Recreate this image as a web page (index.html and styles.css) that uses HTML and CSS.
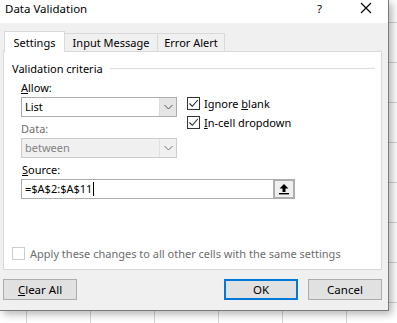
FILE: index.html
```html
<!DOCTYPE html>
<html lang="en">

<head>
    <meta charset="UTF-8">
    <title>Data Validation</title>
    <link rel="stylesheet" href="styles.css">
</head>

<body>
    <div class="dialog">
        <div class="titlebar">
            <span class="title">Data Validation</span>
            <span class="help">?</span>
            <svg class="close" width="12" height="12" viewBox="0 0 12 12">
                <path d="M1 1 L11 11 M11 1 L1 11" stroke="#000" stroke-width="1.1" fill="none" />
            </svg>
        </div>

        <div class="content">
            <div class="tabs">
                <div class="tab active">Settings</div>
                <div class="tab input-tab">Input Message</div>
                <div class="tab alert-tab">Error Alert</div>
            </div>

            <div class="panel">
                <div class="group-title">
                    <span>Validation criteria</span>
                    <span class="rule"></span>
                </div>

                <div class="criteria">
                    <div class="fields">
                        <div class="label"><u>A</u>llow:</div>
                        <div class="select">
                            <span class="value">List</span>
                            <span class="arrow">
                                <svg width="9" height="6" viewBox="0 0 9 6">
                                    <path d="M0.5 1 L4.5 5 L8.5 1" stroke="#555" fill="none" />
                                </svg>
                            </span>
                        </div>
                        <div class="label disabled">Data:</div>
                        <div class="select off">
                            <span class="value">between</span>
                            <span class="arrow">
                                <svg width="9" height="6" viewBox="0 0 9 6">
                                    <path d="M0.5 1 L4.5 5 L8.5 1" stroke="#777" fill="none" />
                                </svg>
                            </span>
                        </div>
                    </div>

                    <div class="checks">
                        <div class="check">
                            <span class="box">
                                <svg width="11" height="11" viewBox="0 0 11 11">
                                    <path d="M1.5 5.5 L4.3 8.3 L9.8 2" stroke="#222" stroke-width="1.1" fill="none" />
                                </svg>
                            </span>
                            <span>Ignore <u>b</u>lank</span>
                        </div>
                        <div class="check">
                            <span class="box">
                                <svg width="11" height="11" viewBox="0 0 11 11">
                                    <path d="M1.5 5.5 L4.3 8.3 L9.8 2" stroke="#222" stroke-width="1.1" fill="none" />
                                </svg>
                            </span>
                            <span><u>I</u>n-cell dropdown</span>
                        </div>
                    </div>
                </div>

                <div class="label source-label"><u>S</u>ource:</div>
                <div class="source-row">
                    <div class="input">=$A$2:$A$11<span class="caret"></span></div>
                    <div class="pick">
                        <svg width="12" height="12" viewBox="0 0 12 12">
                            <path d="M6 1 L10.5 5.5 L7.5 5.5 L7.5 9 L4.5 9 L4.5 5.5 L1.5 5.5 Z" fill="#000" />
                            <rect x="1" y="10" width="10" height="1.4" fill="#000" />
                        </svg>
                    </div>
                </div>

                <div class="apply">
                    <span class="box empty"></span>
                    <span>Apply these changes to all other cells with the same settings</span>
                </div>
            </div>

            <div class="footer">
                <button class="btn"><u>C</u>lear All</button>
                <div class="spacer"></div>
                <button class="btn primary">OK</button>
                <button class="btn">Cancel</button>
            </div>
        </div>
    </div>
</body>

</html>
```

FILE: styles.css
```css
body {
    margin: 0;
    width: 397px;
    height: 323px;
    overflow: hidden;
    font-family: "Noto Sans", "Open Sans", sans-serif;
    font-size: 11px;
    color: #000;
    background-color: #fff;
    background-image:
        repeating-linear-gradient(to right, transparent 0, transparent 26px, #d4d4d4 26px, #d4d4d4 27px, transparent 27px, transparent 64px),
        repeating-linear-gradient(to bottom, transparent 0, transparent 22px, #d4d4d4 22px, #d4d4d4 23px, transparent 23px, transparent 40px);
    background-size: 100% 100%, 100% 100%;
}

.dialog {
    width: 388px;
    height: 310px;
    background-color: #f0f0f0;
    border-right: 1px solid #7a7a7a;
    border-bottom: 1px solid #7a7a7a;
    box-shadow: 3px 3px 8px rgba(0, 0, 0, 0.3);
    display: flex;
    flex-direction: column;
}

.titlebar {
    height: 23px;
    box-sizing: border-box;
    background-color: #fff;
    display: flex;
    align-items: flex-start;
    padding: 1px 0 0 5px;
    font-size: 11.5px;
}

.title {
    line-height: 15px;
}

.help {
    margin-left: auto;
    line-height: 15px;
    margin-right: 38px;
}

.close {
    margin-top: 1px;
    margin-right: 16px;
}

.content {
    flex: 1;
    padding: 7px 6px 0 3px;
    display: flex;
    flex-direction: column;
}

.tabs {
    display: flex;
    align-items: flex-end;
    height: 21px;
    padding-left: 1px;
}

.tab {
    height: 18px;
    line-height: 18px;
    border: 1px solid #d9d9d9;
    border-bottom: none;
    margin-left: -1px;
    background-color: #f0f0f0;
    text-align: center;
    box-sizing: border-box;
}

.tab.active {
    width: 61px;
    height: 21px;
    line-height: 21px;
    background-color: #fff;
    position: relative;
    z-index: 1;
    margin-bottom: -1px;
    margin-left: 0;
}

.input-tab {
    width: 94px;
}

.alert-tab {
    width: 68px;
}

.panel {
    height: 219px;
    box-sizing: border-box;
    background-color: #fff;
    border: 1px solid #d9d9d9;
    padding: 8px 6px 0 8px;
}

.group-title {
    display: flex;
    align-items: center;
    height: 16px;
}

.rule {
    flex: 1;
    height: 1px;
    background-color: #dcdcdc;
    margin-left: 7px;
}

.criteria {
    display: flex;
    padding-left: 9px;
    margin-top: 2px;
}

.fields {
    width: 156px;
}

.label {
    height: 19px;
    line-height: 19px;
}

.label.disabled {
    color: #6d6d6d;
    margin-top: 2px;
}

.source-label {
    padding-left: 10px;
    margin-top: 2px;
}

.select {
    height: 20px;
    border: 1px solid #adadad;
    display: flex;
    box-sizing: border-box;
}

.select .value {
    flex: 1;
    line-height: 18px;
    padding-left: 3px;
}

.select .arrow {
    width: 16px;
    background-color: #e5e5e5;
    border-left: 1px solid #dcdcdc;
    display: flex;
    align-items: center;
    justify-content: center;
}

.select.off {
    background-color: #f0f0f0;
    border-color: #cccccc;
    color: #838383;
}

.select.off .arrow {
    background-color: #f0f0f0;
    border-left: 1px solid #e0e0e0;
}

.checks {
    margin-left: 10px;
    padding-top: 16px;
}

.check {
    display: flex;
    align-items: center;
    height: 19px;
}

.box {
    width: 13px;
    height: 13px;
    box-sizing: border-box;
    border: 1px solid #333;
    display: inline-flex;
    align-items: center;
    justify-content: center;
    margin-right: 4px;
    background-color: #fff;
}

.box.empty {
    border-color: #cccccc;
    margin-right: 5px;
}

.source-row {
    display: flex;
    margin-left: 9px;
    height: 20px;
}

.input {
    width: 252px;
    box-sizing: border-box;
    border: 1px solid #adadad;
    border-right: none;
    line-height: 18px;
    padding-left: 3px;
    display: flex;
    align-items: center;
}

.caret {
    width: 1px;
    height: 14px;
    background-color: #000;
    margin-left: 1px;
}

.pick {
    width: 22px;
    box-sizing: border-box;
    border: 2px solid #adadad;
    background-color: #f0f0f0;
    display: flex;
    align-items: center;
    justify-content: center;
}

.apply {
    display: flex;
    align-items: center;
    height: 16px;
    color: #6d6d6d;
    margin-top: 46px;
}

.footer {
    display: flex;
    margin-top: 9px;
}

.spacer {
    flex: 1;
}

.btn {
    font-family: inherit;
    font-size: 11.5px;
    width: 74px;
    height: 21px;
    background-color: #e1e1e1;
    border: 1px solid #adadad;
    padding: 0;
    color: #000;
    margin-left: 10px;
}

.btn:first-child {
    margin-left: 0;
}

.btn.primary {
    border: 2px solid #0078d7;
}
```
